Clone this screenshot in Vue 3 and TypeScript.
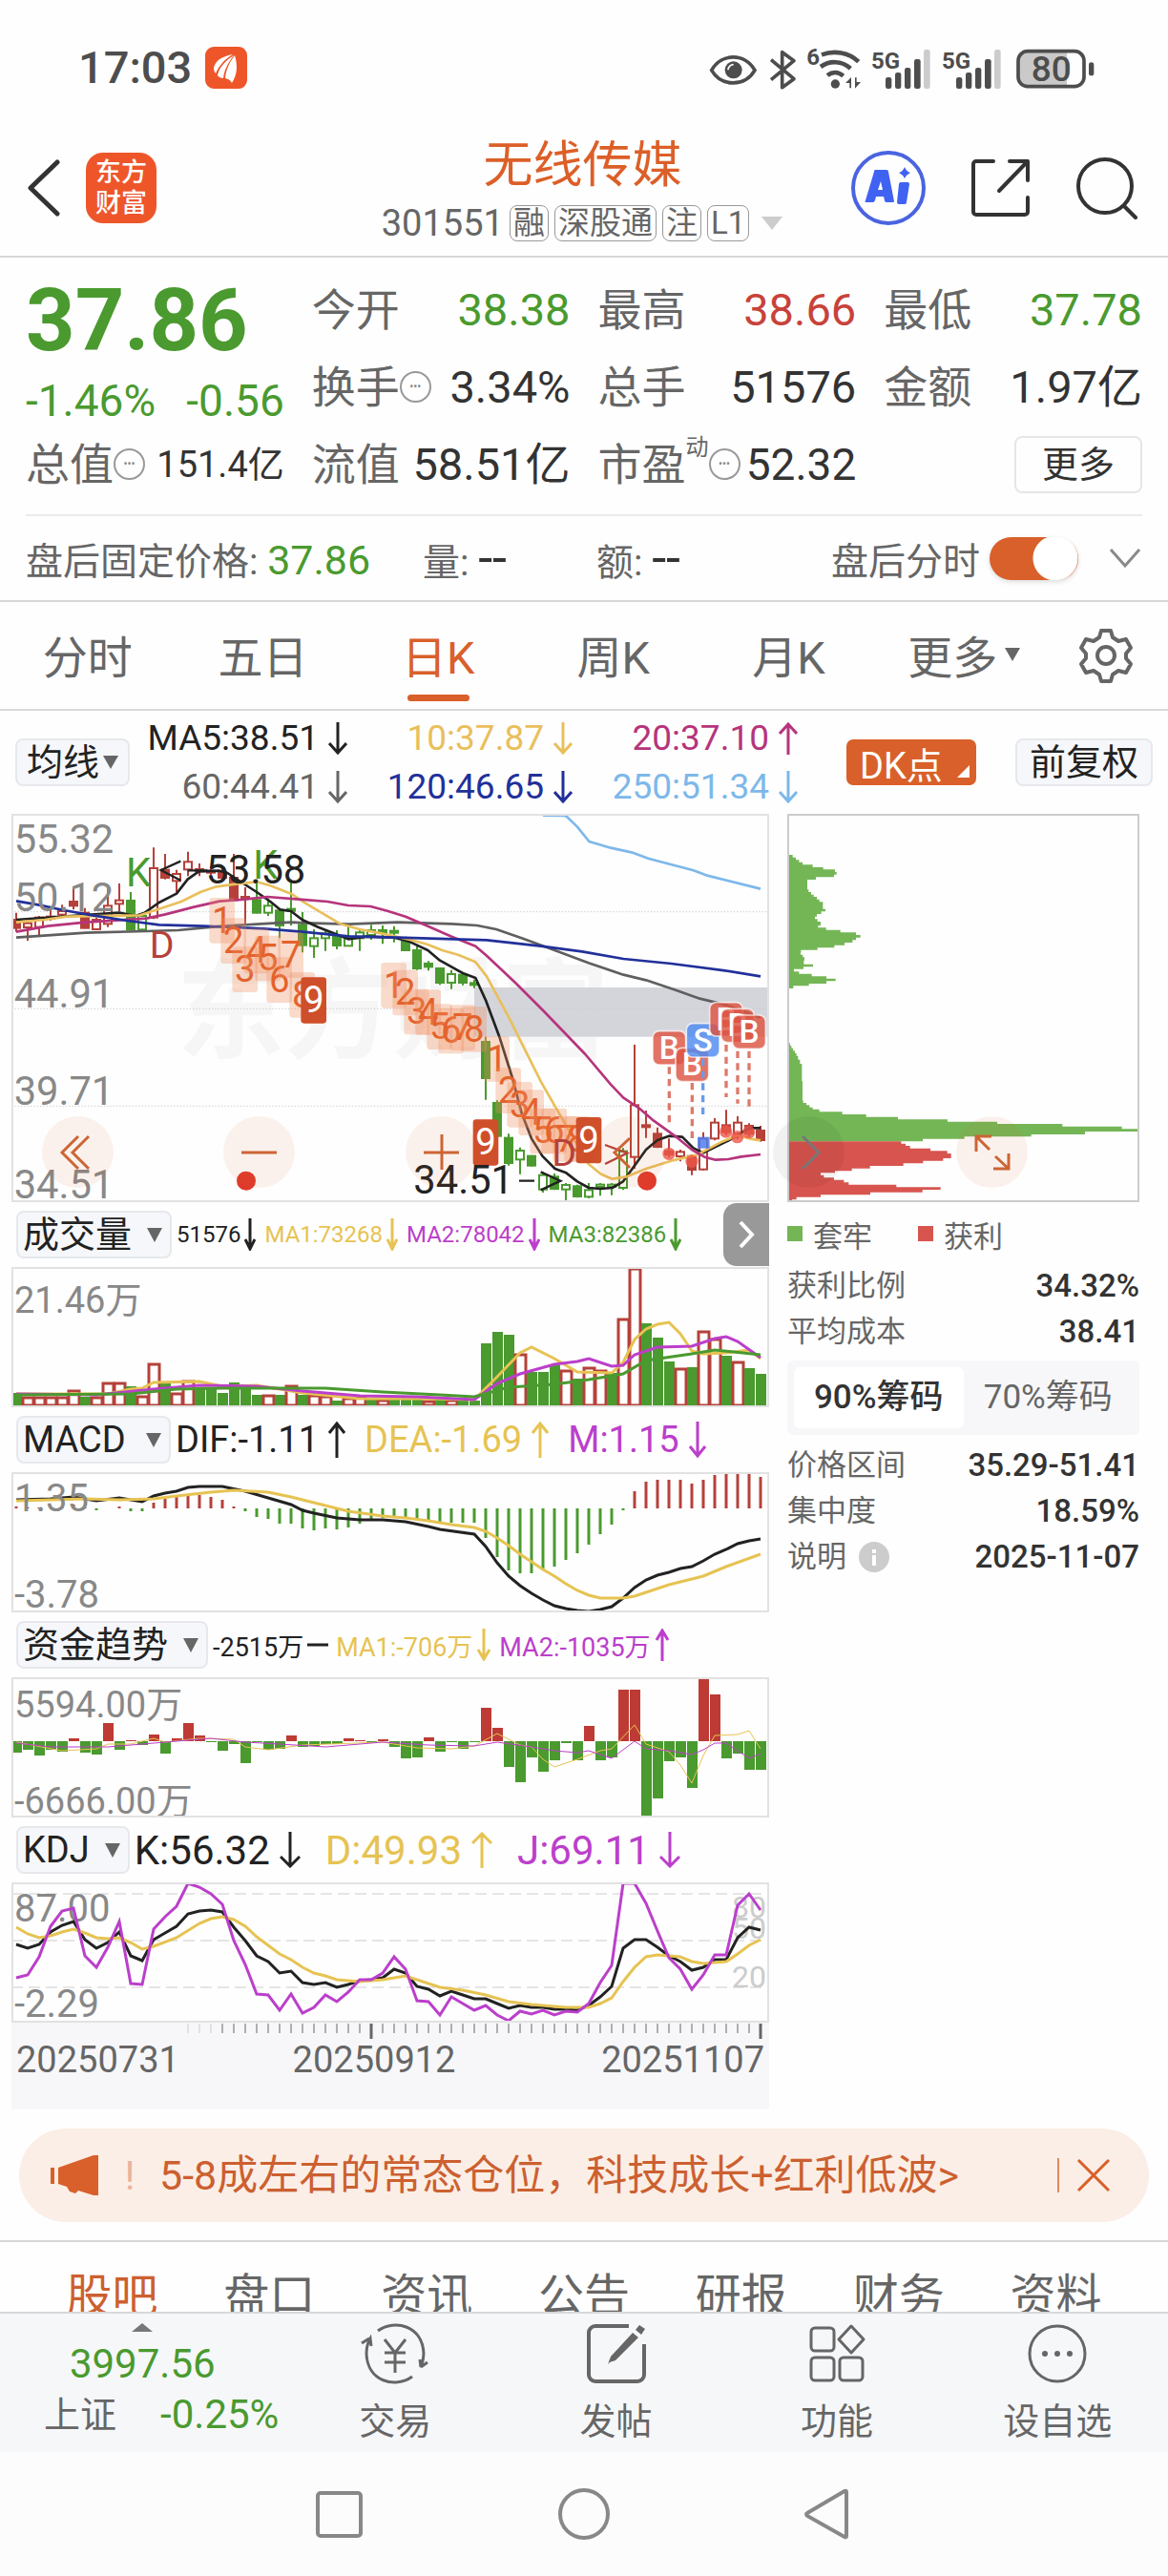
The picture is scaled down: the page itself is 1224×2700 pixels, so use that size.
<script setup lang="ts">
type Point = [number, number]
type Candle = ['r' | 'R' | 'g' | 'G', number, number, number, number]

const periods = ['分时', '五日', '日K', '周K', '月K', '更多']
const sections = ['股吧', '盘口', '资讯', '公告', '研报', '财务', '资料']

const averages = [
  { text: 'MA5:38.51', up: false, color: '#222' },
  { text: '10:37.87', up: false, color: '#e9bf5c' },
  { text: '20:37.10', up: true, color: '#b6347c' },
  { text: '60:44.41', up: false, color: '#666' },
  { text: '120:46.65', up: false, color: '#21309a' },
  { text: '250:51.34', up: false, color: '#7db8ea' },
]

const YELLOW = '#e6c352'
const PURPLE = '#bb3fcb'
const GREEN = '#4a9a2f'
const RED = '#b5413a'

// Wick top, wick bottom, body top, body bottom. Upper-case kinds are hollow.
const candles: Candle[] = [
  ['r', 350, 410, 372, 398], ['R', 375, 438, 383, 396], ['R', 360, 420, 365, 395], ['R', 340, 375, 362, 369],
  ['R', 325, 362, 345, 356], ['r', 272, 340, 315, 328], ['r', 335, 400, 350, 398], ['R', 365, 405, 372, 402],
  ['R', 265, 395, 328, 385], ['R', 258, 345, 311, 322], ['g', 285, 405, 312, 403], ['G', 350, 405, 360, 403],
  ['R', 145, 370, 210, 365], ['r', 165, 245, 215, 240], ['R', 215, 285, 228, 250], ['R', 158, 235, 190, 214],
  ['r', 195, 235, 213, 219], ['r', 205, 245, 218, 224], ['r', 205, 245, 222, 240], ['r', 165, 312, 240, 310],
  ['r', 270, 390, 300, 304], ['g', 245, 352, 310, 350], ['G', 305, 360, 328, 350], ['g', 335, 430, 343, 390],
  ['G', 245, 390, 338, 344], ['g', 348, 475, 388, 452], ['G', 402, 492, 430, 455], ['G', 405, 470, 415, 430],
  ['g', 405, 465, 425, 453], ['G', 390, 455, 430, 454], ['G', 405, 470, 412, 430], ['G', 388, 435, 405, 420],
  ['g', 390, 448, 405, 412], ['g', 392, 443, 407, 413], ['g', 425, 470, 438, 468], ['g', 455, 530, 468, 525],
  ['g', 502, 532, 510, 520], ['g', 525, 577, 525, 570], ['G', 530, 590, 543, 570], ['g', 540, 578, 545, 570],
  ['g', 560, 587, 571, 577], ['g', 740, 938, 756, 870], ['g', 940, 1055, 948, 1052], ['g', 1045, 1145, 1058, 1137],
  ['G', 1088, 1172, 1098, 1126], ['g', 1112, 1148, 1115, 1145], ['G', 1165, 1230, 1175, 1220], ['g', 1170, 1222, 1180, 1218],
  ['G', 1200, 1262, 1206, 1220], ['g', 1205, 1246, 1210, 1242], ['G', 1200, 1248, 1222, 1243], ['G', 1200, 1240, 1205, 1212],
  ['G', 1200, 1238, 1205, 1212], ['G', 1090, 1222, 1100, 1215], ['R', 765, 1155, 955, 1118], ['r', 972, 1058, 1018, 1024],
  ['r', 1025, 1090, 1045, 1086], ['r', 1060, 1120, 1100, 1110], ['R', 1095, 1132, 1102, 1116], ['r', 1110, 1175, 1115, 1158],
  ['R', 1040, 1160, 1060, 1157], ['R', 996, 1066, 1010, 1060], ['r', 970, 1050, 1018, 1040], ['R', 990, 1062, 1010, 1045],
  ['r', 1012, 1055, 1020, 1045], ['r', 1020, 1070, 1035, 1065],
]
const candleX = (i: number): number => 51 + 36 * i

const priceLines = [
  { color: '#7db8ea', points: '1707,44 1775,45 1782,48 1815,80 1852,126 1920,146 1985,160 2040,180 2180,217 2220,232 2391,275' },
  { color: '#5f5f5f', points: '51,428 270,413 460,408 560,405 700,392 820,385 915,380 960,382 1095,386 1250,380 1420,385 1500,390 1560,402 1640,430 1750,470 1850,508 1960,545 2031,562 2120,592 2200,620 2283,640 2391,680' },
  { color: '#222222', points: '51,372 200,362 375,350 425,360 455,350 500,318 555,290 590,245 625,220 690,218 715,225 765,258 807,285 850,315 880,340 915,345 950,372 1000,395 1050,415 1095,433 1150,425 1240,428 1285,440 1345,468 1383,500 1455,540 1495,555 1527,625 1570,740 1611,870 1640,980 1671,1060 1705,1115 1745,1155 1780,1168 1815,1195 1851,1215 1887,1218 1925,1215 1959,1195 1995,1145 2031,1095 2067,1065 2103,1052 2145,1055 2180,1090 2211,1105 2283,1070 2319,1050 2355,1027 2391,1027' },
  { color: '#e9bf5c', points: '51,380 140,372 210,362 440,358 500,338 570,315 630,285 680,268 740,260 807,253 850,265 915,290 960,320 1070,385 1130,402 1200,415 1290,435 1345,450 1390,468 1440,482 1495,505 1530,550 1600,680 1700,880 1780,1020 1850,1140 1890,1172 1925,1187 1970,1180 2031,1155 2110,1130 2190,1112 2270,1070 2319,1050 2355,1060 2391,1066' },
  { color: '#b6347c', points: '51,410 150,392 270,380 460,368 520,355 610,332 690,314 770,308 840,300 940,308 1030,315 1095,327 1165,330 1220,345 1275,362 1340,390 1420,425 1495,455 1530,485 1620,570 1710,660 1840,795 1920,890 1960,932 2010,965 2050,1000 2130,1058 2175,1095 2215,1118 2250,1127 2290,1125 2330,1117 2391,1110' },
  { color: '#21309a', points: '51,313 120,325 200,342 290,358 400,375 500,388 640,392 830,400 950,410 1095,424 1250,428 1530,436 1700,455 1830,472 1960,495 2110,510 2280,532 2391,550' },
]

const counts: [number, number, number][] = [
  [1, 658, 303], [2, 694, 367], [3, 730, 457], [4, 766, 398], [5, 802, 422], [6, 838, 490], [7, 874, 412], [8, 910, 537],
  [1, 1198, 507], [2, 1234, 530], [3, 1270, 590], [4, 1306, 592], [5, 1342, 637], [6, 1378, 650], [7, 1414, 640], [8, 1450, 645],
  [1, 1522, 738], [2, 1558, 838], [3, 1594, 882], [4, 1630, 907], [5, 1666, 965], [6, 1702, 965], [7, 1738, 990], [8, 1774, 990],
]
const nines: Point[] = [[946, 553], [1487, 1000], [1811, 993]]

const trades = [
  { kind: 'B', x: 2052, y: 722, from: 835, to: 1020, dot: 1108 },
  { kind: 'B', x: 2124, y: 775, from: 885, to: 1070, dot: 1132 },
  { kind: 'S', x: 2158, y: 698, from: 810, to: 1000, dot: 0 },
  { kind: 'B', x: 2231, y: 632, from: 765, to: 930, dot: 1038 },
  { kind: 'B', x: 2267, y: 652, from: 785, to: 950, dot: 1055 },
  { kind: 'B', x: 2303, y: 672, from: 785, to: 970, dot: 1040 },
]

const chipsUpper: Point[] = [
  [160, 80], [168, 92], [176, 102], [184, 112], [191, 123], [199, 155], [207, 188], [214, 225], [222, 230], [230, 222], [238, 165],
  [246, 138], [262, 138], [277, 142], [285, 150], [293, 158], [300, 168], [308, 176], [316, 187], [338, 195], [346, 182], [354, 168],
  [362, 162], [370, 170], [378, 180], [390, 172], [397, 197], [404, 242], [412, 291], [420, 305], [428, 291], [436, 280], [444, 255],
  [452, 223], [460, 170], [467, 118], [475, 117], [482, 124], [490, 129], [500, 127], [512, 156], [520, 126], [527, 96], [535, 112],
  [542, 152], [550, 198], [557, 227], [565, 198], [573, 143], [580, 94], [588, 77],
]
const chipsLower: Point[] = [
  [745, 80], [760, 84], [768, 88], [776, 93], [784, 99], [792, 104], [800, 109], [812, 115], [825, 121], [880, 123], [940, 125],
  [948, 135], [955, 145], [962, 155], [968, 176], [976, 248], [984, 323], [992, 423], [1000, 579], [1007, 735], [1014, 940],
  [1022, 1127], [1030, 1178], [1038, 1011], [1047, 842], [1054, 632], [1061, 501], [1069, 77],
]
const chipsProfit: Point[] = [
  [1069, 433], [1076, 447], [1083, 461], [1091, 525], [1099, 578], [1107, 590], [1122, 565], [1130, 502], [1138, 440], [1146, 335],
  [1154, 278], [1162, 225], [1168, 180], [1175, 190], [1183, 222], [1190, 253], [1198, 268], [1205, 418], [1213, 557], [1221, 500],
  [1229, 336], [1237, 180], [1244, 104], [1252, 90], [1259, 77],
]
// Each row gives a bar's top edge and its right edge; the bar runs down to the next row.
const steps = (rows: Point[]): string =>
  `M77 ${rows[0][0]}` + rows.map(([y, x], i) => `V${y}H${x}V${i + 1 < rows.length ? rows[i + 1][0] : y}`).join('') + 'H77Z'

const barX = (i: number): number => 5 + 12 * i
const line = (pts: Point[]): string => pts.map(([i, y]) => `${barX(i)},${y}`).join(' ')
const dense = (ys: number[]): string => ys.map((y, i) => `${barX(i)},${y}`).join(' ')

// Positive volume: rising day. Negative volume: falling day.
const volumes = [
  -14, 10, 10, 10, 10, 17, -10, 10, 25, 25, -21, 11, 45, -24, 14, 27, -18, -18, -14, -25, -22, -12, 12, -12, 22, -12, 12, 11, -6, 9,
  10, -8, 7, -7, -7, -9, 6, -7, 7, -6, -6, -66, -78, -75, 55, -36, -36, -43, 38, -29, 41, 38, -35, 92, 145, -87, -72, -47, 40, -41,
  79, 71, -53, 47, -40, -34,
]
const volumeLines = [
  { color: YELLOW, points: line([[0, 133], [8, 133], [10, 128], [11, 127], [12, 121], [16, 120], [18, 125], [21, 124], [25, 132], [30, 138], [36, 138], [40, 139], [42, 115], [44, 90], [45, 84], [47, 96], [49, 110], [52, 111], [53, 100], [54, 76], [55, 65], [56, 60], [57, 58], [58, 70], [59, 88], [60, 91], [62, 90], [64, 87], [65, 96]]) },
  { color: PURPLE, points: line([[0, 133], [7, 134], [12, 128], [16, 124], [21, 125], [25, 130], [30, 135], [35, 136], [40, 139], [42, 122], [44, 112], [47, 102], [49, 99], [50, 96], [52, 104], [53, 103], [54, 92], [56, 84], [59, 83], [61, 75], [62, 73], [63, 78], [65, 95]]) },
  { color: GREEN, points: line([[0, 134], [10, 133], [14, 128], [18, 127], [27, 127], [32, 131], [37, 134], [40, 136], [43, 126], [47, 123], [50, 118], [53, 112], [55, 98], [59, 91], [61, 87], [65, 92]]) },
]

const macd = [
  2, 1, 1, 0, 1, 4, 1, -2, 0, 2, -3, -3, 6, 10, 12, 15, 14, 12, 9, 2, -3, -9, -11, -16, -16, -21, -23, -21, -22, -20, -16, -12, -10,
  -9, -10, -12, -14, -15, -15, -15, -15, -31, -51, -65, -68, -68, -65, -61, -54, -47, -38, -27, -17, -2, 18, 28, 30, 30, 30, 26, 30,
  35, 38, 38, 37, 33,
]
const dif = line([[0, 29], [3, 28], [5, 26], [7, 30], [9, 27], [11, 31], [12, 25], [13, 22], [14, 20], [15, 16], [16, 15], [18, 15], [20, 20], [22, 27], [24, 34], [25, 40], [26, 43], [28, 48], [30, 50], [32, 50], [34, 52], [36, 57], [37, 60], [40, 65], [41, 78], [42, 95], [43, 109], [44, 119], [45, 127], [46, 134], [47, 140], [48, 143], [49, 145], [50, 146], [51, 144], [52, 141], [53, 132], [54, 121], [55, 113], [56, 108], [57, 105], [58, 101], [59, 99], [60, 93], [61, 86], [62, 81], [63, 75], [64, 72], [65, 70]])
const dea = line([[0, 30], [6, 28], [9, 29], [12, 28], [14, 25], [17, 21], [19, 19], [22, 21], [24, 26], [26, 32], [29, 41], [32, 46], [34, 48], [36, 51], [38, 55], [40, 58], [41, 62], [42, 69], [43, 77], [44, 86], [45, 94], [46, 102], [47, 109], [48, 117], [49, 124], [50, 129], [51, 132], [53, 132], [54, 130], [55, 126], [57, 118], [60, 109], [62, 99], [65, 86]])

const funds = [
  -12, -9, -15, -9, -11, 3, -12, -14, 19, -9, 1, -4, 7, -13, 3, 19, 6, -1, -10, -3, -23, -1, -9, -8, 6, -6, -5, -3, -3, 3, 1, -1, 2,
  -6, -18, -17, 4, -11, -1, -8, -1, 35, 14, -27, -43, -17, -32, -20, -2, -20, 16, -20, -17, 54, 54, -79, -60, -21, -17, -49, 66, 49,
  -18, -13, -30, -30,
]
const fundLines = [
  { color: YELLOW, points: line([[0, 68], [4, 77], [7, 75], [8, 70], [10, 70], [12, 64], [13, 68], [16, 64], [19, 65], [20, 73], [22, 76], [25, 71], [32, 68], [35, 74], [38, 75], [40, 72], [42, 59], [44, 71], [45, 73], [46, 86], [47, 94], [49, 86], [51, 77], [52, 75], [54, 50], [55, 70], [57, 78], [58, 92], [59, 111], [60, 82], [61, 61], [63, 60], [64, 56], [65, 75]]) },
  { color: PURPLE, points: line([[0, 69], [3, 73], [8, 73], [12, 69], [17, 64], [20, 68], [23, 70], [27, 73], [32, 68], [36, 71], [40, 72], [42, 68], [45, 73], [47, 77], [49, 79], [50, 77], [52, 85], [54, 67], [55, 75], [57, 77], [59, 81], [60, 76], [61, 69], [62, 69], [64, 85], [65, 80]]) },
]

const kdjK = dense([65, 69, 65, 52, 45, 41, 60, 69, 63, 52, 77, 82, 60, 53, 46, 33, 30, 29, 31, 47, 61, 77, 83, 95, 93, 105, 107, 105, 110, 107, 103, 102, 100, 91, 95, 109, 112, 119, 114, 118, 122, 122, 127, 132, 129, 131, 131, 133, 133, 134, 129, 120, 109, 69, 60, 60, 68, 77, 83, 92, 89, 81, 81, 58, 47, 50])
const kdjD = line([[0, 47], [1, 54], [2, 58], [3, 56], [4, 52], [5, 49], [6, 53], [7, 58], [8, 59], [9, 58], [10, 63], [11, 70], [12, 67], [14, 58], [16, 43], [17, 38], [18, 36], [19, 39], [20, 46], [21, 57], [22, 66], [23, 75], [24, 81], [25, 89], [26, 95], [27, 98], [28, 102], [30, 104], [32, 102], [34, 98], [36, 106], [37, 110], [39, 113], [41, 118], [43, 125], [45, 128], [48, 131], [50, 131], [51, 127], [52, 121], [53, 104], [54, 89], [55, 78], [56, 76], [58, 78], [59, 83], [60, 85], [62, 83], [63, 75], [64, 66], [65, 60]])
const kdjJ = dense([100, 97, 78, 46, 30, 27, 77, 89, 68, 41, 106, 107, 49, 36, 25, 1, 5, 12, 23, 61, 86, 117, 118, 134, 117, 137, 131, 118, 125, 115, 102, 102, 95, 78, 91, 124, 125, 139, 120, 127, 134, 129, 139, 145, 135, 138, 134, 139, 135, 136, 127, 105, 87, 1, 1, 22, 51, 79, 91, 112, 97, 76, 76, 24, 12, 29])

const ticks = Array.from({ length: 51 }, (_, i) => i + 15)
</script>

<template>
  <div class="page">
    <header class="status">
      <span class="clock">17:03</span>
      <svg class="app-mark" viewBox="0 0 44 44" aria-hidden="true">
        <rect width="44" height="44" rx="9" fill="#ee562a" />
        <path d="M29 8C18 10 11 14 9 22c0 3 1 5 2 6 3-7 8-14 18-20zM30 9c-9 6-15 12-17 21 1 2 4 3 6 3 1-8 4-15 11-24zM31 9c-6 8-9 15-10 24 3 1 5 1 7 5 6-9 6-19 3-29z" fill="#fff" />
      </svg>
      <svg class="status-icons" viewBox="36 48 1224 141" aria-hidden="true">
        <path d="M47 125C78 70 152 70 183 125 152 178 78 178 47 125z" fill="none" stroke="#4d4d4d" stroke-width="11" />
        <circle cx="116" cy="124" r="27" fill="#4d4d4d" />
        <path d="M99 124a17 17 0 0 1 17-17" fill="none" stroke="#fff" stroke-width="5" />
        <path d="M234 92l72 60-37 27V68l37 27-72 60" fill="none" stroke="#4d4d4d" stroke-width="11" stroke-linejoin="round" />
        <text x="346" y="108" font-size="72" font-weight="700" fill="#4d4d4d">6</text>
        <g fill="none" stroke="#4d4d4d" stroke-width="14">
          <path d="M393 76c40-14 85-8 116 22M390 114c28-20 66-20 94 5M411 141c16-12 35-12 50 2" />
        </g>
        <circle cx="436" cy="168" r="14" fill="#4d4d4d" />
        <path d="M468 165l18-18v34h-5v-16zM516 162l-18 20v-34h5v14z" fill="#4d4d4d" />
        <g v-for="x in [0, 222]" :key="x" fill="#4d4d4d">
          <text :x="x + 549" y="120" font-size="72" font-weight="700">5G</text>
          <rect :x="x + 594" y="147" width="19" height="36" rx="7" />
          <rect :x="x + 624" y="132" width="19" height="51" rx="7" />
          <rect :x="x + 654" y="117" width="19" height="66" rx="7" />
          <rect :x="x + 684" y="90" width="20" height="93" rx="7" />
          <rect :x="x + 714" y="60" width="20" height="123" rx="7" fill="#ccc" />
        </g>
        <path d="M1042 68h122v106h-122a30 30 0 0 1-30-30v-46a30 30 0 0 1 30-30z" fill="#c9c9c9" />
        <rect x="1011" y="65" width="207" height="111" rx="30" fill="none" stroke="#4d4d4d" stroke-width="11" />
        <rect x="1233" y="100" width="16" height="42" rx="8" fill="#4d4d4d" />
        <text x="1115" y="160" font-size="111" font-weight="500" text-anchor="middle" fill="#4d4d4d">80</text>
      </svg>
    </header>

    <nav class="topbar">
      <div class="top-left">
        <button class="bare" aria-label="返回">
          <svg width="36" height="60" viewBox="0 0 36 60"><path d="M32 3L4 30l28 27" fill="none" stroke="#333" stroke-width="5" stroke-linecap="round" stroke-linejoin="round" /></svg>
        </button>
        <a class="brand" href="#">东方<br>财富</a>
      </div>
      <div class="title">
        <h1>无线传媒</h1>
        <p class="code">
          301551<span class="tag">融</span><span class="tag">深股通</span><span class="tag">注</span><span class="tag">L1</span>
          <svg width="24" height="16" viewBox="0 0 24 16"><path d="M1 1h22L12 15z" fill="#ccc" /></svg>
        </p>
      </div>
      <div class="top-right">
        <button class="bare" aria-label="Ai">
          <svg width="80" height="80" viewBox="0 0 80 80">
            <circle cx="40" cy="40" r="37" fill="none" stroke="#4a64e0" stroke-width="4" />
            <path d="M26 21h12q2 0 2 2l6 31q0 1-1 1h-7q-2 0-2-2l-1-4h-8l-1 4q-1 2-2 2h-8q-1 0 0-2l9-30q0-2 1-2zM32 33l-3 9h5z" fill="#4062f2" fill-rule="evenodd" />
            <path d="M53 34h7q2 0 2 2l-3 19q0 2-2 2h-6q-2 0-2-2l2-19q0-2 2-2zM57 18q2 5 6 6-4 2-6 6-2-4-6-6 4-1 6-6z" fill="#4062f2" />
          </svg>
        </button>
        <button class="bare" aria-label="分享">
          <svg width="62" height="62" viewBox="0 0 62 62" fill="none" stroke="#333" stroke-width="4" stroke-linecap="round" stroke-linejoin="round">
            <path d="M23 3H5a3 3 0 0 0-3 3v50a3 3 0 0 0 3 3h51a3 3 0 0 0 3-3V41M40 3h19v20M58 4L29 34" />
          </svg>
        </button>
        <button class="bare" aria-label="搜索">
          <svg width="66" height="66" viewBox="0 0 66 66" fill="none" stroke="#333" stroke-width="4" stroke-linecap="round">
            <circle cx="31" cy="31" r="28" /><path d="M51 52l12 12" />
          </svg>
        </button>
      </div>
    </nav>

    <section class="quote">
      <div class="last">
        <strong>37.86</strong>
        <div class="change"><span>-1.46%</span><span>-0.56</span></div>
      </div>
      <div class="cell"><span>今开</span><b class="down">38.38</b></div>
      <div class="cell"><span>最高</span><b class="up">38.66</b></div>
      <div class="cell"><span>最低</span><b class="down">37.78</b></div>
      <div class="cell"><span>换手<i class="more-dot">•••</i></span><b>3.34%</b></div>
      <div class="cell"><span>总手</span><b>51576</b></div>
      <div class="cell"><span>金额</span><b>1.97亿</b></div>
      <div class="cell"><span>总值<i class="more-dot">•••</i></span><b class="small">151.4亿</b></div>
      <div class="cell"><span>流值</span><b>58.51亿</b></div>
      <div class="cell"><span>市盈<sup>动</sup><i class="more-dot">•••</i></span><b class="tight">52.32</b></div>
      <div class="cell end"><button class="more">更多</button></div>
    </section>

    <section class="after">
      <span class="fixed">盘后固定价格: <b class="down">37.86</b></span>
      <span class="pair">量: <b>--</b></span>
      <span class="pair">额: <b>--</b></span>
      <label class="switch">盘后分时<input type="checkbox" checked></label>
      <button class="bare" aria-label="展开">
        <svg width="34" height="22" viewBox="0 0 34 22"><path d="M2 2l15 17L32 2" fill="none" stroke="#8a8a8a" stroke-width="3" /></svg>
      </button>
    </section>

    <nav class="periods">
      <button v-for="p in periods" :key="p" class="bare period" :class="{ on: p === '日K' }">
        {{ p }}<svg v-if="p === '更多'" width="16" height="14" viewBox="0 0 16 14"><path d="M0 0h16L8 14z" fill="#666" /></svg>
      </button>
      <button class="bare gear" aria-label="设置">
        <svg width="58" height="58" viewBox="0 0 58 58" fill="none" stroke="#666" stroke-width="4" stroke-linejoin="round">
          <path d="M24 3h10l2 7 6 4 8-2 5 9-5 6v5l5 6-5 9-8-2-6 4-2 7H24l-2-7-6-4-8 2-5-9 5-6v-5l-5-6 5-9 8 2 6-4z" />
          <circle cx="29" cy="29" r="9" />
        </svg>
      </button>
    </nav>

    <div class="averages">
      <button class="pill">均线<svg width="16" height="14" viewBox="0 0 16 14"><path d="M0 0h16L8 14z" fill="#666" /></svg></button>
      <div class="avg-grid">
        <span v-for="a in averages" :key="a.text" :style="{ color: a.color }">
          {{ a.text }}<svg width="20" height="34" viewBox="0 0 20 34" :class="{ flip: a.up }"><path d="M10 0v32M1 22l9 10 9-10" /></svg>
        </span>
      </div>
      <button class="dk">DK点<svg width="13" height="13" viewBox="0 0 13 13"><path d="M13 0v13H0z" fill="#fff" /></svg></button>
      <button class="pill right">前复权</button>
    </div>

    <main class="board">
      <div class="charts">
        <div class="stage">
          <svg class="plot" viewBox="36 39 2382 1221">
            <text x="555" y="780" font-size="340" font-weight="700" fill="#f6f6f6">东方财富</text>
            <rect x="1491" y="585" width="924" height="155" fill="#d4d5db" />
            <path d="M36 347H2418M36 652H2418M36 958H2418" stroke="#ccc" stroke-width="3" stroke-dasharray="4 6" />
            <g v-for="(c, i) in candles" :key="i" :stroke="c[0].toLowerCase() === 'r' ? RED : GREEN" stroke-width="6">
              <path :d="`M${candleX(i)} ${c[1]}V${c[3]}M${candleX(i)} ${c[4]}V${c[2]}`" />
              <rect :x="candleX(i) - 12" :y="c[3]" width="24" :height="c[4] - c[3]" :fill="c[0] === 'r' ? RED : c[0] === 'g' ? GREEN : '#fff'" />
            </g>
            <polyline v-for="l in priceLines" :key="l.color" :points="l.points" fill="none" :stroke="l.color" stroke-width="8" stroke-linejoin="round" />
            <g v-for="(c, i) in counts" :key="`c${i}`">
              <rect :x="c[1]" :y="c[2]" width="80" height="143" rx="10" fill="#ee8f60" fill-opacity="0.32" />
              <text :x="c[1] + 40" :y="c[2] + 110" font-size="115" text-anchor="middle" fill="#e4622c">{{ c[0] }}</text>
            </g>
            <text x="1735" y="1145" font-size="118" fill="#b5413a">D</text>
            <g v-for="n in nines" :key="n[0]">
              <rect :x="n[0]" :y="n[1]" width="80" height="145" rx="10" fill="#cf4f2a" />
              <text :x="n[0] + 40" :y="n[1] + 110" font-size="115" text-anchor="middle" fill="#fff">9</text>
            </g>
            <g v-for="t in trades" :key="t.x">
              <path :d="`M${t.x + 52} ${t.from}V${t.to}`" :stroke="t.kind === 'S' ? '#6a9bea' : '#dd7a6b'" stroke-width="10" stroke-dasharray="22 16" />
              <rect :x="t.x" :y="t.y" width="104" height="106" rx="20" :fill="t.kind === 'S' ? '#4f8af0' : '#dd5442'" fill-opacity="0.82" stroke="#fff" stroke-opacity="0.7" stroke-width="5" />
              <text :x="t.x + 52" :y="t.y + 87" font-size="100" font-weight="500" text-anchor="middle" fill="#fff">{{ t.kind }}</text>
              <circle v-if="t.dot" :cx="t.x + 51" :cy="t.dot" r="20" fill="#ee5648" fill-opacity="0.8" />
            </g>
            <rect x="2193" y="1055" width="38" height="36" fill="#4f7ef0" fill-opacity="0.85" />
            <g font-size="125">
              <g fill="#888">
                <text x="44" y="163">55.32</text><text x="44" y="345">50.12</text><text x="44" y="648">44.91</text>
                <text x="44" y="955">39.71</text><text x="44" y="1248">34.51</text>
              </g>
              <text x="396" y="268" fill="#4a9a2f">K</text>
              <text x="796" y="242" fill="#4a9a2f">K</text>
              <text x="470" y="492" font-size="118" fill="#b5413a">D</text>
              <g fill="#222"><text x="647" y="258">53.58</text><text x="1300" y="1233">34.51</text></g>
            </g>
            <g fill="none" stroke="#222" stroke-width="7">
              <path d="M568 188l-62 28 62 32M590 217h62M1632 1193h48M1700 1165l62 28-62 29" />
              <path d="M1902 1080l70 26-70 34" stroke="#b5413a" />
            </g>
            <circle cx="774" cy="1193" r="30" fill="#df3a2c" />
            <circle cx="2034" cy="1193" r="30" fill="#df3a2c" />
          </svg>
          <button class="round r1" aria-label="最左"><svg viewBox="0 0 75 75"><path d="M38 21L21 38l17 17M49 21L32 38l17 17" /></svg></button>
          <button class="round r2" aria-label="缩小"><svg viewBox="0 0 75 75"><path d="M19 38h37" /></svg></button>
          <button class="round r3" aria-label="放大"><svg viewBox="0 0 75 75"><path d="M19 38h37M38 19v37" /></svg></button>
          <button class="round r4" aria-label="右移"><svg viewBox="0 0 75 75"><path d="M37 23L21 38l16 16" /></svg></button>
        </div>

        <div class="head">
          <button class="pill wide">成交量<svg width="16" height="22" viewBox="0 0 16 22"><path d="M0 4h16L8 19z" fill="#666" /></svg></button>
          <p class="vals narrow">
            <span>51576<svg width="12" height="34" viewBox="0 0 12 34"><path d="M6 0v32M1 22l5 10 5-10" /></svg></span>
            <span class="y">MA1:73268<svg width="12" height="34" viewBox="0 0 12 34"><path d="M6 0v32M1 22l5 10 5-10" /></svg></span>
            <span class="p">MA2:78042<svg width="12" height="34" viewBox="0 0 12 34"><path d="M6 0v32M1 22l5 10 5-10" /></svg></span>
            <span class="g">MA3:82386<svg width="12" height="34" viewBox="0 0 12 34"><path d="M6 0v32M1 22l5 10 5-10" /></svg></span>
          </p>
          <button class="next" aria-label="下一页"><svg width="18" height="30" viewBox="0 0 18 30"><path d="M3 2l12 13L3 28" fill="none" stroke="#fff" stroke-width="4" /></svg></button>
        </div>
        <svg class="plot" viewBox="0 0 794 147">
          <g v-for="(v, i) in volumes" :key="i">
            <rect v-if="v < 0" :x="barX(i) - 5" :y="146 + v" width="11" :height="-v" :fill="GREEN" />
            <rect v-else :x="barX(i) - 5" :y="147 - v" width="11" :height="v - 2" fill="#fff" :stroke="RED" stroke-width="3" />
          </g>
          <polyline v-for="l in volumeLines" :key="l.color" :points="l.points" fill="none" :stroke="l.color" stroke-width="3" />
          <text x="3" y="48" font-size="38" fill="#888">21.46万</text>
        </svg>

        <div class="head">
          <button class="pill wide three">MACD<svg width="16" height="22" viewBox="0 0 16 22"><path d="M0 4h16L8 19z" fill="#666" /></svg></button>
          <p class="vals mid">
            <span>DIF:-1.11<svg class="flip" width="18" height="38" viewBox="0 0 18 38"><path d="M9 0v36M1 26l8 10 8-10" /></svg></span>
            <span class="y">DEA:-1.69<svg class="flip" width="18" height="38" viewBox="0 0 18 38"><path d="M9 0v36M1 26l8 10 8-10" /></svg></span>
            <span class="p">M:1.15<svg width="18" height="38" viewBox="0 0 18 38"><path d="M9 0v36M1 26l8 10 8-10" /></svg></span>
          </p>
        </div>
        <svg class="plot" viewBox="0 0 794 147">
          <g v-for="(v, i) in macd" :key="i">
            <path v-if="v" :d="`M${barX(i)} 38v${-v}`" :stroke="v > 0 ? RED : GREEN" stroke-width="3" />
          </g>
          <polyline :points="dif" fill="none" stroke="#222" stroke-width="3" />
          <polyline :points="dea" fill="none" :stroke="YELLOW" stroke-width="3" />
          <g font-size="40" fill="#888"><text x="3" y="41">1.35</text><text x="3" y="142">-3.78</text></g>
        </svg>

        <div class="head">
          <button class="pill wide">资金趋势<svg width="16" height="22" viewBox="0 0 16 22"><path d="M0 4h16L8 19z" fill="#666" /></svg></button>
          <p class="vals fund">
            <span>-2515万<svg width="22" height="34" viewBox="0 0 22 34"><path d="M0 17h22" /></svg></span>
            <span class="y">MA1:-706万<svg width="16" height="34" viewBox="0 0 16 34"><path d="M8 0v32M2 22l6 10 6-10" /></svg></span>
            <span class="p">MA2:-1035万<svg class="flip" width="16" height="34" viewBox="0 0 16 34"><path d="M8 0v32M2 22l6 10 6-10" /></svg></span>
          </p>
        </div>
        <svg class="plot" viewBox="0 0 794 147">
          <g v-for="(v, i) in funds" :key="i">
            <rect :x="barX(i) - 5" :y="v > 0 ? 67 - v : 67" width="11" :height="Math.abs(v)" :fill="v > 0 ? '#bd3b34' : GREEN" />
          </g>
          <polyline v-for="l in fundLines" :key="l.color" :points="l.points" fill="none" :stroke="l.color" stroke-width="1" />
          <g font-size="38" fill="#888"><text x="3" y="42">5594.00万</text><text x="3" y="143">-6666.00万</text></g>
        </svg>

        <div class="head">
          <button class="pill wide">KDJ<svg width="16" height="22" viewBox="0 0 16 22"><path d="M0 4h16L8 19z" fill="#666" /></svg></button>
          <p class="vals big">
            <span>K:56.32<svg width="22" height="38" viewBox="0 0 22 38"><path d="M11 0v36M1 26l10 10 10-10" /></svg></span>
            <span class="y">D:49.93<svg class="flip" width="22" height="38" viewBox="0 0 22 38"><path d="M11 0v36M1 26l10 10 10-10" /></svg></span>
            <span class="p">J:69.11<svg width="22" height="38" viewBox="0 0 22 38"><path d="M11 0v36M1 26l10 10 10-10" /></svg></span>
          </p>
        </div>
        <svg class="plot" viewBox="0 0 794 147">
          <path d="M0 12H794M0 61H794M0 110H794" stroke="#ccc" stroke-dasharray="12 6" />
          <g font-size="32" fill="#ccc" text-anchor="end"><text x="791" y="37">80</text><text x="791" y="59">50</text><text x="791" y="110">20</text></g>
          <g font-size="40" fill="#888"><text x="3" y="41">87.00</text><text x="3" y="141">-2.29</text></g>
          <polyline :points="kdjK" fill="none" stroke="#222" stroke-width="3" />
          <polyline :points="kdjD" fill="none" :stroke="YELLOW" stroke-width="3" />
          <polyline :points="kdjJ" fill="none" :stroke="PURPLE" stroke-width="3" />
        </svg>
        <div class="axis">
          <svg viewBox="0 0 794 18">
            <path v-for="t in ticks" :key="t" :d="`M${barX(t)} 1v${t === 31 || t === 65 ? 16 : 10}`" stroke="#666" :stroke-width="t === 31 || t === 65 ? 3 : 1" :stroke-opacity="t < 18 ? 0.3 : 1" />
          </svg>
          <p><span>20250731</span><span>20250912</span><span>20251107</span></p>
        </div>
      </div>

      <aside class="side">
        <div class="stage">
          <svg class="plot chips" viewBox="75 39 1107 1221">
            <path :d="steps(chipsUpper)" fill="#74b656" />
            <path :d="steps(chipsLower)" fill="#74b656" />
            <path :d="steps(chipsProfit)" fill="#d8544f" />
          </svg>
          <button class="round s1" aria-label="右移"><svg viewBox="0 0 75 75"><path d="M31 21l17 17-17 17" /></svg></button>
          <button class="round s2" aria-label="全屏"><svg viewBox="0 0 75 75"><path d="M35 35L21 21M21 37V21h16M41 42l14 13M55 39v16H39" /></svg></button>
        </div>
        <p class="legend"><i class="sw"></i>套牢<i class="sw red"></i>获利</p>
        <dl>
          <div><dt>获利比例</dt><dd>34.32%</dd></div>
          <div><dt>平均成本</dt><dd>38.41</dd></div>
        </dl>
        <div class="seg"><button class="on">90%筹码</button><button>70%筹码</button></div>
        <dl>
          <div><dt>价格区间</dt><dd>35.29-51.41</dd></div>
          <div><dt>集中度</dt><dd>18.59%</dd></div>
          <div><dt>说明<svg width="33" height="33" viewBox="0 0 33 33"><circle cx="16" cy="16" r="16" fill="#ccc" /><path d="M16 8v4M16 14v11" stroke="#fff" stroke-width="4" /></svg></dt><dd>2025-11-07</dd></div>
        </dl>
      </aside>
    </main>

    <div class="banner">
      <svg width="52" height="44" viewBox="0 0 52 44"><path d="M0 14h4v17H0zM8 14L45 1h5v42h-5l-16-5-3 3-6-2-3-5-9-3z" fill="#d9602a" /></svg>
      <span class="faint">!</span>
      <a href="#">5-8成左右的常态仓位，科技成长+红利低波&gt;</a>
      <button class="bare" aria-label="关闭"><svg width="36" height="36" viewBox="0 0 36 36"><path d="M2 2l32 32M34 2L2 34" stroke="#d9602a" stroke-width="3" /></svg></button>
    </div>

    <nav class="sections">
      <a v-for="s in sections" :key="s" href="#" :class="{ on: s === '股吧' }">{{ s }}</a>
    </nav>

    <footer class="actions">
      <div class="index">
        <svg width="22" height="9" viewBox="0 0 22 9"><path d="M11 0l11 9H0z" fill="#777" /></svg>
        <b>3997.56</b>
        <p>上证<span>-0.25%</span></p>
      </div>
      <button class="bare act">
        <svg width="74" height="66" viewBox="0 0 74 66" fill="none" stroke="#666" stroke-width="3">
          <path d="M19 9C37-4 66 4 67 33c0 5-1 9-3 14l-1-8M64 47l7-5M55 57C37 70 8 62 7 33c0-6 1-11 4-16l1 8M10 17l-8 5M26 18l11 14 11-14M37 32v21M26 32h22M26 42h22" />
        </svg>交易
      </button>
      <button class="bare act">
        <svg width="64" height="66" viewBox="0 0 64 66" fill="none" stroke="#666" stroke-width="4">
          <path d="M45 4H10a7 7 0 0 0-7 7v44a7 7 0 0 0 7 7h44a7 7 0 0 0 7-7V23" />
          <path d="M25 42l-2 2 3-8 23-25 6 5-24 24zM52 8l4-5 6 4-4 6z" fill="#666" stroke="none" />
        </svg>发帖
      </button>
      <button class="bare act">
        <svg width="62" height="66" viewBox="0 0 62 66" fill="none" stroke="#666" stroke-width="3">
          <rect x="4" y="6" width="24" height="24" rx="4" /><rect x="4" y="37" width="24" height="24" rx="4" /><rect x="34" y="37" width="24" height="24" rx="4" />
          <path d="M46 4l13 14-13 14-13-14z" stroke-linejoin="round" />
        </svg>功能
      </button>
      <button class="bare act">
        <svg width="66" height="66" viewBox="0 0 66 66"><circle cx="33" cy="33" r="29" fill="none" stroke="#666" stroke-width="3" /><g fill="#666"><circle cx="20" cy="33" r="3" /><circle cx="33" cy="33" r="3" /><circle cx="46" cy="33" r="3" /></g></svg>设自选
      </button>
    </footer>

    <div class="system" aria-hidden="true">
      <svg width="56" height="56" viewBox="0 0 56 56"><rect x="5" y="6" width="45" height="45" rx="3" /></svg>
      <svg width="56" height="56" viewBox="0 0 56 56"><circle cx="28" cy="28" r="25" /></svg>
      <svg width="56" height="56" viewBox="0 0 56 56"><path d="M47 5v46q0 2-2 1L6 30q-2-2 0-3L45 4q2-1 2 1z" /></svg>
    </div>
  </div>
</template>

<style>
body { margin: 0; background: #fff; }
</style>

<style scoped>
.page { font-family: Roboto, "Noto Sans CJK SC", sans-serif; color: #666; background: #fefefe; }
.page * { box-sizing: border-box; }
p, h1, dl, dd { margin: 0; }
i, b { font-style: normal; font-weight: 400; }
a { color: inherit; text-decoration: none; }
button { font: inherit; color: inherit; padding: 0; margin: 0; border: 0; background: none; white-space: nowrap; }
svg { display: block; flex: none; }
.flip { transform: scaleY(-1); }

.status { display: flex; align-items: center; height: 140px; padding: 2px 74px 0 82px; }
.clock { font-size: 47px; font-weight: 500; color: #4d4d4d; line-height: 48px; }
.app-mark { width: 44px; height: 44px; margin-left: 14px; }
.status-icons { width: 408px; height: 47px; margin-left: auto; }

.topbar { display: grid; grid-template-columns: 1fr auto 1fr; align-items: center; height: 130px; padding: 0 31px 0 28px; border-bottom: 2px solid #d8d8d8; }
.top-left { display: flex; align-items: center; gap: 26px; padding-bottom: 14px; }
.brand { display: flex; align-items: center; justify-content: center; width: 74px; height: 74px; border-radius: 18px; background: #ee562a; color: #fff; font-size: 27px; line-height: 32px; font-weight: 500; }
.top-right { display: flex; align-items: center; justify-content: flex-end; gap: 47px; padding-bottom: 14px; }
.title { display: flex; flex-direction: column; align-items: center; padding-bottom: 8px; }
h1 { font-size: 52px; line-height: 60px; font-weight: 400; color: #dc5f28; }
.code { display: flex; align-items: center; gap: 6px; font-size: 38px; line-height: 44px; padding-top: 8px; }
.tag { border: 1px solid #999; border-radius: 8px; font-size: 33px; line-height: 36px; padding: 0 3px; }
.code svg { margin-left: 6px; }

.quote { display: grid; grid-template-columns: repeat(4, 1fr); column-gap: 29px; grid-auto-rows: 81px; margin: 0 27px; padding: 14px 0 12px; border-bottom: 2px solid #ebebeb; color: #333; }
.last { grid-row: span 2; color: #4a9a2f; display: flex; flex-direction: column; }
.last strong { font-size: 90px; line-height: 106px; font-weight: 700; }
.change { display: flex; justify-content: space-between; font-size: 46px; line-height: 60px; }
.cell { display: flex; align-items: center; justify-content: space-between; font-size: 46px; line-height: 60px; white-space: nowrap; }
.cell span { display: flex; align-items: center; color: #666; }
.cell b { font-size: 47px; }
.cell .tight { font-size: 46px; }
.cell .small { font-size: 38px; }
.down { color: #4a9a2f; }
.quote .up { color: #c8423a; }
.quote .down { color: #4a9a2f; }
.cell sup { align-self: flex-start; font-size: 24px; line-height: 24px; }
.more-dot { width: 33px; height: 33px; border: 2px solid #999; border-radius: 50%; font-size: 12px; line-height: 29px; text-align: center; color: #888; }
.cell.end { justify-content: flex-end; }
.more { width: 134px; height: 60px; border: 2px solid #e6e6e6; border-radius: 8px; font-size: 38px; line-height: 54px; color: #333; }

.after { display: flex; align-items: center; height: 90px; padding: 0 28px 0 27px; border-bottom: 2px solid #d8d8d8; font-size: 39px; white-space: nowrap; }
.after b { color: #333; }
.after b.down { color: #4a9a2f; font-size: 43px; }
.after .pair b { font-size: 54px; line-height: 60px; }
.fixed { width: 416px; }
.pair { width: 182px; }
.switch { display: flex; align-items: center; gap: 10px; margin-left: auto; margin-right: 32px; }
.switch input { appearance: none; margin: 0; width: 93px; height: 45px; border-radius: 23px; background: radial-gradient(circle at 69px 22px, #fff 23px, transparent 24px), #d9602a; box-shadow: 0 2px 5px #ddd; }

.periods { display: flex; height: 114px; border-bottom: 2px solid #d8d8d8; padding-right: 36px; }
.period { position: relative; flex: 1; display: flex; align-items: center; justify-content: center; gap: 8px; font-size: 47px; padding-bottom: 3px; }
.period.on { color: #d9602a; }
.period.on::after { content: ""; position: absolute; bottom: 8px; left: 50%; width: 65px; height: 7px; margin-left: -32px; border-radius: 4px; background: #d9602a; }
.gear { width: 86px; display: flex; align-items: center; justify-content: flex-end; }

.pill { display: flex; align-items: center; gap: 4px; height: 50px; padding: 0 10px; border: 2px solid #e6e8ec; border-radius: 8px; background: #f6f7fa; color: #222; font-size: 38px; line-height: 46px; }
.pill.wide { justify-content: space-between; gap: 16px; padding: 0 8px 0 5px; }
.pill.three { width: 162px; }
.averages { display: flex; align-items: center; padding: 0 16px; height: 108px; }
.avg-grid { flex: 1; display: grid; grid-template-columns: 228px 1fr 1fr; margin-right: 51px; font-size: 37px; line-height: 51px; }
.avg-grid span { display: flex; align-items: center; justify-content: flex-end; gap: 10px; white-space: nowrap; }
.avg-grid svg path, .vals svg path { fill: none; stroke: currentColor; stroke-width: 3; }
.dk { display: flex; align-items: center; justify-content: space-between; width: 136px; height: 48px; padding: 0 7px 0 14px; margin-right: 41px; border-radius: 7px; background: #d9602a; color: #fff; font-size: 38px; }
.dk svg { align-self: flex-end; margin-bottom: 8px; }
.pill.right { padding: 0 13px; }

.board { display: flex; align-items: flex-start; gap: 19px; padding: 0 30px 0 12px; }
.charts { flex: 794 1 0; min-width: 0; }
.side { flex: 369 1 0; min-width: 0; }
.stage { position: relative; }
.plot { width: 100%; height: auto; outline: 2px solid #e2e2e2; outline-offset: -2px; }
.chips { outline-color: #ccc; }
.round { position: absolute; top: 78%; width: 75px; height: 75px; border-radius: 50%; background: #d9602a15; }
.round svg { width: 75px; height: 75px; fill: none; stroke: #cc6535; stroke-width: 3; }
.r1 { left: 4%; }
.r2 { left: 28%; }
.r3 { left: 52%; }
.r4 { left: 77%; }
.s1 { left: -4%; background: #0000000d; }
.round.s1 svg { stroke: #777; }
.s2 { left: 48%; }

.head { display: flex; align-items: center; height: 68px; padding-left: 5px; color: #222; }
.vals { display: flex; flex: 1; padding-left: 5px; white-space: nowrap; }
.vals span { display: flex; align-items: center; }
.narrow { font-size: 24px; gap: 9px; }
.narrow span, .fund span { gap: 4px; }
.fund { font-size: 27px; gap: 8px; }
.mid { font-size: 38px; gap: 20px; }
.mid span, .big span { gap: 10px; }
.big { font-size: 42px; gap: 26px; }
.y { color: #e6c352; }
.p { color: #bb3fcb; }
.g { color: #4a9a2f; }
.next { flex: none; display: flex; align-items: center; justify-content: center; width: 48px; height: 66px; border-radius: 14px 0 0 14px; background: #999; }

.axis { background: #f7f7f9; height: 91px; }
.axis svg { width: 100%; height: auto; }
.axis p { display: grid; grid-template-columns: 290fr 170fr 324fr; padding: 0 5px; font-size: 38px; line-height: 42px; }
.axis span:nth-child(2) { text-align: center; }
.axis span:nth-child(3) { text-align: right; }

.legend { display: flex; align-items: center; height: 64px; padding-top: 2px; font-size: 31px; }
.sw { width: 16px; height: 16px; margin-right: 11px; background: #74b656; }
.sw.red { margin-left: 48px; background: #d8544f; }
dl div { display: flex; align-items: center; justify-content: space-between; height: 48px; font-size: 31px; line-height: 40px; }
dt { display: flex; align-items: center; gap: 13px; }
dd { color: #333; font-weight: 500; font-size: 33px; }
.seg { display: flex; height: 78px; margin: 6px 0 8px; padding: 7px; border-radius: 6px; background: #f7f7f9; }
.seg button { flex: 1; border-radius: 6px; font-size: 35px; line-height: 60px; }
.seg .on { background: #fff; color: #333; font-weight: 500; }

.banner { display: flex; align-items: center; height: 98px; margin: 20px 20px 19px; padding: 0 40px 0 33px; border-radius: 49px; background: #fbeee6; color: #cc6030; font-size: 43px; line-height: 60px; white-space: nowrap; }
.faint { width: 62px; text-align: center; opacity: 0.4; }
.banner .bare { margin-left: auto; padding-left: 18px; border-left: 2px solid #dc8a60; }

.sections { display: flex; height: 75px; padding: 0 35px; overflow: hidden; border-top: 2px solid #d8d8d8; font-size: 48px; line-height: 114px; }
.sections a { flex: 1; text-align: center; }
.sections .on { color: #cc6030; }

.actions { display: flex; height: 147px; border-top: 2px solid #d8d8d8; background: #f6f7f9; }
.index { flex: 298 1 0; display: flex; flex-direction: column; align-items: center; padding-top: 10px; font-size: 38px; }
.index b { margin-top: 8px; font-size: 42px; line-height: 52px; color: #4a9a2f; }
.index p { display: flex; align-items: center; gap: 46px; padding-left: 40px; line-height: 54px; white-space: nowrap; }
.index p span { font-size: 42px; color: #4a9a2f; }
.act { flex: 231 1 0; display: flex; flex-direction: column; align-items: center; padding-top: 9px; font-size: 38px; line-height: 76px; }

.system { display: flex; justify-content: center; align-items: center; gap: 200px; height: 130px; background: #fcfcfc; }
.system svg { fill: none; stroke: #888; stroke-width: 4; }
</style>
